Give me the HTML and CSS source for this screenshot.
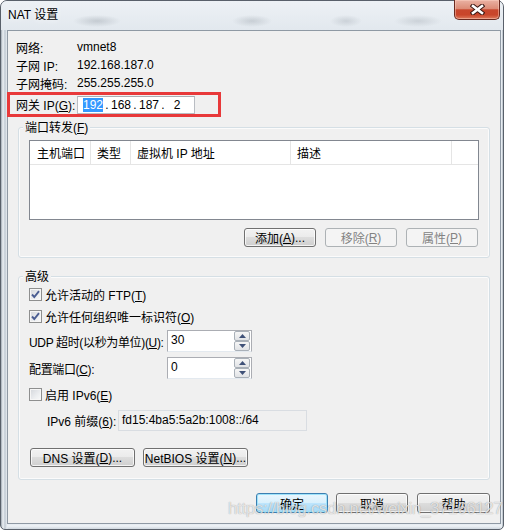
FILE: index.html
```html
<!DOCTYPE html>
<html>
<head>
    <meta charset="utf-8">
    <title>NAT 设置</title>
    <link rel="stylesheet" href="styles.css">
</head>
<body>
    <div class="window">
        <div class="titlebar">
            <span class="title">NAT 设置</span>
            <span class="close-btn">
                <svg width="15" height="11" viewBox="0 0 15 11">
                    <path d="M3 2 L12 9 M12 2 L3 9" stroke="#3a1712" stroke-width="4.6" stroke-linecap="square"/>
                    <path d="M3 2 L12 9 M12 2 L3 9" stroke="#fff" stroke-width="2.6" stroke-linecap="square"/>
                </svg>
            </span>
        </div>

        <div class="client">
            <div class="info-row"><span class="info-label">网络:</span><span>vmnet8</span></div>
            <div class="info-row"><span class="info-label">子网 IP:</span><span>192.168.187.0</span></div>
            <div class="info-row"><span class="info-label">子网掩码:</span><span>255.255.255.0</span></div>

            <div class="gateway">
                <span class="info-label">网关 IP(<u>G</u>):</span>
                <div class="ip-input">
                    <span class="octet"><span class="selected">192</span></span>
                    <span class="dot">.</span>
                    <span class="octet">168</span>
                    <span class="dot">.</span>
                    <span class="octet">187</span>
                    <span class="dot">.</span>
                    <span class="octet">2</span>
                </div>
            </div>

            <div class="group">
                <div class="group-title">端口转发(<u>F</u>)</div>
                <div class="list">
                    <div class="list-header">
                        <span class="col col-port">主机端口</span>
                        <span class="col col-type">类型</span>
                        <span class="col col-ip">虚拟机 IP 地址</span>
                        <span class="col col-desc">描述</span>
                    </div>
                </div>
                <div class="btn-row">
                    <button class="btn">添加(<u>A</u>)...</button>
                    <button class="btn" disabled>移除(<u>R</u>)</button>
                    <button class="btn" disabled>属性(<u>P</u>)</button>
                </div>
            </div>

            <div class="group group-advanced">
                <div class="group-title">高级</div>

                <div class="check-row first">
                    <span class="cb"><svg width="11" height="11" viewBox="0 0 11 11"><path d="M2 5.5 L4.3 8 L9 2.2" fill="none" stroke="#4a5d92" stroke-width="1.9"/></svg></span>
                    <span>允许活动的 FTP(<u>T</u>)</span>
                </div>
                <div class="check-row">
                    <span class="cb"><svg width="11" height="11" viewBox="0 0 11 11"><path d="M2 5.5 L4.3 8 L9 2.2" fill="none" stroke="#4a5d92" stroke-width="1.9"/></svg></span>
                    <span>允许任何组织唯一标识符(<u>O</u>)</span>
                </div>

                <div class="field-row udp">
                    <span class="field-label">UDP 超时(以秒为单位)(<u>U</u>):</span>
                    <div class="spin">
                        <span class="spin-value">30</span>
                        <div class="spin-btns">
                            <span class="spin-btn"><svg width="7" height="4" viewBox="0 0 7 4"><path d="M0 4 L3.5 0 L7 4 Z" fill="#3f5178"/></svg></span>
                            <span class="spin-btn"><svg width="7" height="4" viewBox="0 0 7 4"><path d="M0 0 L3.5 4 L7 0 Z" fill="#3f5178"/></svg></span>
                        </div>
                    </div>
                </div>
                <div class="field-row port">
                    <span class="field-label">配置端口(<u>C</u>):</span>
                    <div class="spin">
                        <span class="spin-value">0</span>
                        <div class="spin-btns">
                            <span class="spin-btn"><svg width="7" height="4" viewBox="0 0 7 4"><path d="M0 4 L3.5 0 L7 4 Z" fill="#3f5178"/></svg></span>
                            <span class="spin-btn"><svg width="7" height="4" viewBox="0 0 7 4"><path d="M0 0 L3.5 4 L7 0 Z" fill="#3f5178"/></svg></span>
                        </div>
                    </div>
                </div>

                <div class="check-row ipv6">
                    <span class="cb"></span>
                    <span>启用 IPv6(<u>E</u>)</span>
                </div>

                <div class="prefix-row">
                    <span class="prefix-label">IPv6 前缀(<u>6</u>):</span>
                    <div class="prefix-box">fd15:4ba5:5a2b:1008::/64</div>
                </div>

                <div class="btn-row left">
                    <button class="btn btn-wide">DNS 设置(<u>D</u>)...</button>
                    <button class="btn btn-wide">NetBIOS 设置(<u>N</u>)...</button>
                </div>
            </div>

            <div class="dialog-buttons">
                <button class="btn btn-tall btn-default">确定</button>
                <button class="btn btn-tall">取消</button>
                <button class="btn btn-tall btn-help">帮助</button>
            </div>
        </div>

        <div class="watermark">https://blog.csdn.net/weixin_37166127</div>
    </div>
</body>
</html>
```

FILE: styles.css
```css
body {
    margin: 0;
    background: #fff;
    font-family: "Liberation Sans", "Noto Sans CJK SC", sans-serif;
    font-size: 12px;
    color: #000;
}

/* window frame */
.window {
    position: relative;
    width: 504px;
    height: 530px;
    box-sizing: border-box;
    display: flex;
    flex-direction: column;
    padding: 0 2px 5px 6px;
    border: 1px solid #59606a;
    border-radius: 7px 7px 5px 5px;
    background:
        linear-gradient(to right, #9ea8b2 0, #eef2f6 2px, #c0c9d2 4px, #e9eef3 6px, rgba(233, 238, 243, 0) 7px),
        linear-gradient(to left, #9ea8b2 0, #e9eef3 1px, rgba(233, 238, 243, 0) 2px),
        linear-gradient(to top, #cfd7df 0, #eef2f6 3px, rgba(238, 242, 246, 0) 5px),
        #e4eaf0;
}

.titlebar {
    display: flex;
    justify-content: space-between;
    align-items: flex-start;
    height: 29px;
    margin: 0 -2px 0 -6px;
    padding: 0 3px 0 7px;
    border-radius: 6px 6px 0 0;
    background:
        radial-gradient(ellipse 24px 6px at 96px 20px, rgba(110, 120, 130, 0.28), rgba(110, 120, 130, 0)),
        radial-gradient(ellipse 20px 6px at 251px 20px, rgba(110, 120, 130, 0.25), rgba(110, 120, 130, 0)),
        radial-gradient(ellipse 16px 6px at 345px 20px, rgba(110, 120, 130, 0.22), rgba(110, 120, 130, 0)),
        radial-gradient(ellipse 24px 6px at 417px 20px, rgba(110, 120, 130, 0.22), rgba(110, 120, 130, 0)),
        linear-gradient(#edf1f5, #e2e8ee);
}

.title {
    margin-top: 6px;
    line-height: 16px;
    text-shadow: 0 0 6px #fff;
}

.close-btn {
    display: flex;
    align-items: center;
    justify-content: center;
    width: 46px;
    height: 20px;
    margin-top: -1px;
    box-sizing: border-box;
    border: 1px solid #6a2a20;
    border-top: none;
    border-radius: 0 0 5px 5px;
    background: linear-gradient(#eab2a3 0%, #dc8c77 45%, #c8472d 52%, #c9452a 78%, #dd7a5d 100%);
    box-shadow: inset 0 0 0 1px rgba(255, 215, 200, 0.45);
}

/* client area */
.client {
    flex: 1;
    border: 1px solid #8f99a4;
    background: #f0f0f0;
    padding: 7px 0 10px;
}

.info-row {
    display: flex;
    align-items: center;
    height: 18px;
    padding-left: 8px;
}

.info-label {
    width: 61px;
    flex-shrink: 0;
}

.gateway {
    display: flex;
    align-items: center;
    width: 214px;
    height: 25px;
    box-sizing: border-box;
    margin-left: -1px;
    padding-left: 6px;
    border: 3px solid #e8393a;
}

.ip-input {
    display: flex;
    align-items: center;
    align-self: flex-end;
    width: 118px;
    height: 18px;
    box-sizing: border-box;
    padding-left: 5px;
    border: 1px solid #b9bdc3;
    border-top-color: #abadb3;
    background: #fff;
}

.octet {
    width: 20px;
    text-align: center;
}

.dot {
    width: 8px;
    text-align: center;
}

.selected {
    display: inline-block;
    line-height: 14px;
    background: #3399ff;
    color: #fff;
}

/* group boxes */
.group {
    margin: 10px 10px 0;
    padding: 0 10px 10px;
    border: 1px solid #d5dfe5;
    border-radius: 3px;
    box-shadow: inset 0 0 0 1px rgba(255, 255, 255, 0.7);
}

.group-advanced {
    margin-top: 18px;
    padding-bottom: 12px;
}

.group-title {
    width: fit-content;
    margin: -8px 0 0 -6px;
    padding: 0 2px;
    line-height: 16px;
    background: #f0f0f0;
}

.list {
    margin-top: 4px;
    height: 80px;
    box-sizing: border-box;
    border: 1px solid #828790;
    background: #fff;
}

.list-header {
    display: flex;
    height: 24px;
    box-sizing: border-box;
    border-bottom: 1px solid #e5e5e5;
}

.col {
    display: flex;
    align-items: center;
    box-sizing: border-box;
    padding-left: 6px;
    border-right: 1px solid #e5e5e5;
}

.col-port { width: 61px; padding-left: 7px; }
.col-type { width: 40px; }
.col-ip   { width: 160px; }
.col-desc { width: 161px; }

/* buttons */
.btn-row {
    display: flex;
    justify-content: flex-end;
    gap: 9px;
    margin-top: 8px;
    padding-right: 1px;
}

.btn-row.left {
    justify-content: flex-start;
    gap: 8px;
    margin-top: 17px;
    padding: 0 0 0 1px;
}

.btn {
    appearance: none;
    display: flex;
    align-items: center;
    justify-content: center;
    width: 72px;
    height: 19px;
    box-sizing: border-box;
    margin: 0;
    padding: 0;
    font: inherit;
    color: #000;
    border: 1px solid #707070;
    border-radius: 3px;
    background: linear-gradient(#f2f2f2 0%, #ebebeb 49%, #dddddd 50%, #cfcfcf 100%);
    box-shadow: inset 0 0 0 1px rgba(255, 255, 255, 0.75);
}

.btn:disabled {
    color: #838383;
    border-color: #adb2b5;
    background: #f4f4f4;
    box-shadow: none;
}

.btn-wide {
    width: 105px;
}

.btn-tall {
    height: 20px;
}

.btn-default {
    border-color: #3c7fb1;
    background: linear-gradient(#eaf6fd 0%, #d9f0fc 49%, #bee6fd 50%, #a7d9f5 100%);
    box-shadow: inset 0 0 0 1px #9fe3fa;
}

.btn-help {
    width: 73px;
    margin-left: 1px;
}

.dialog-buttons {
    display: flex;
    justify-content: flex-end;
    gap: 8px;
    margin-top: 13px;
    padding-right: 10px;
}

/* checkboxes */
.check-row {
    display: flex;
    align-items: center;
    gap: 3px;
    height: 13px;
    margin-top: 9px;
}

.check-row.first {
    margin-top: 3px;
}

.cb {
    display: flex;
    align-items: center;
    justify-content: center;
    width: 13px;
    height: 13px;
    box-sizing: border-box;
    border: 1px solid #8e8f8f;
    background: linear-gradient(135deg, #d3d6db 0%, #eceef0 60%, #fafafa 100%);
    box-shadow: inset 0 0 0 1px #f6f6f6;
}

/* spin fields */
.field-row {
    display: flex;
    align-items: center;
    height: 22px;
}

.field-row.udp {
    margin-top: 7px;
}

.field-row.port {
    margin-top: 5px;
}

.field-label {
    width: 138px;
    flex-shrink: 0;
    white-space: nowrap;
    letter-spacing: -0.35px;
}

.spin {
    display: flex;
    justify-content: space-between;
    width: 85px;
    height: 22px;
    box-sizing: border-box;
    border: 1px solid #abadb3;
    border-bottom-color: #e3e9ef;
    background: #fff;
}

.spin-value {
    padding: 2px 0 0 3px;
    line-height: 14px;
}

.spin-btns {
    display: flex;
    flex-direction: column;
    padding-right: 1px;
}

.spin-btn {
    display: flex;
    align-items: center;
    justify-content: center;
    width: 16px;
    height: 10px;
    box-sizing: border-box;
    border: 1px solid #a9b0b8;
    border-radius: 2px;
    background: linear-gradient(#f6f6f6, #e1e3e6);
}

/* ipv6 prefix */
.prefix-row {
    display: flex;
    align-items: center;
    height: 21px;
    margin-top: 9px;
}

.prefix-label {
    width: 71px;
    margin-left: 18px;
    flex-shrink: 0;
    white-space: nowrap;
}

.prefix-box {
    width: 189px;
    height: 21px;
    box-sizing: border-box;
    padding: 2px 0 0 3px;
    line-height: 14px;
    border: 1px solid #d9dde2;
    background: #f0f0f0;
}

.watermark {
    position: absolute;
    left: 227px;
    top: 498px;
    font-family: "Liberation Sans", sans-serif;
    font-size: 17px;
    letter-spacing: -0.4px;
    white-space: nowrap;
    color: rgba(255, 255, 255, 0.72);
    text-shadow: 0 0 1px rgba(0, 0, 0, 0.4);
    pointer-events: none;
}
```
